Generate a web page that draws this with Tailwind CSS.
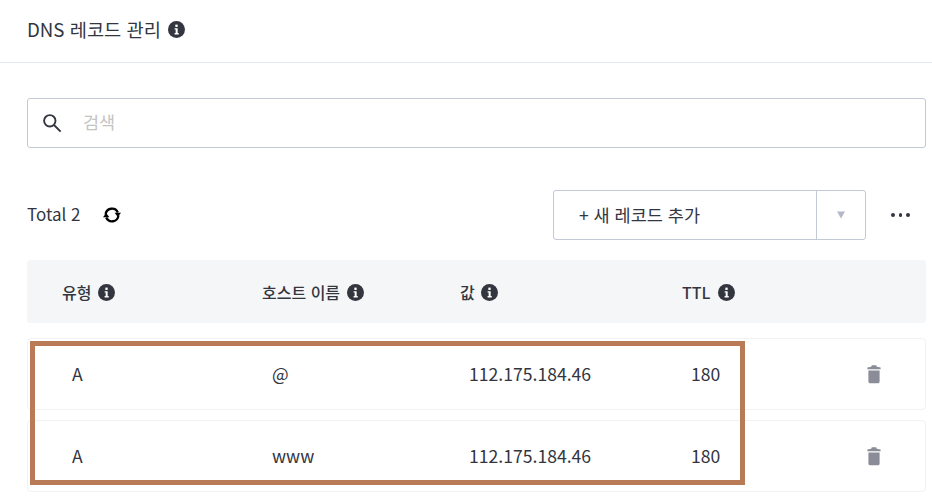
<!DOCTYPE html>
<html lang="ko">
<head>
<meta charset="utf-8">
<title>DNS 레코드 관리</title>
<script src="https://cdn.jsdelivr.net/npm/@tailwindcss/browser@4"></script>
</head>
<body class="bg-white overflow-hidden font-['Noto_Sans_CJK_KR','Noto_Sans',sans-serif] text-[#33363f]">
<div class="relative w-[932px] h-[497px] overflow-hidden">

  <!-- header -->
  <div class="h-[63px] border-b border-[#e3e8ee] pl-[27px] pt-[17px] flex items-start gap-[7px]">
    <span class="text-[18.7px] leading-[24px]">DNS 레코드 관리</span>
    <svg class="w-[17px] h-[17px] mt-[4px]" viewBox="0 0 16 16"><circle cx="8" cy="8" r="8" fill="#33363f"/><rect x="6.9" y="3.4" width="2.2" height="2.2" fill="#fff"/><path d="M6.2 6.8h2.9v4.6h1v1.3H6.2v-1.3h1V8.1h-1z" fill="#fff"/></svg>
  </div>

  <div class="pl-[27px] w-[926px]">
    <!-- search -->
    <div class="mt-[35px] h-[50px] border border-[#c2cad6] rounded-[3px] flex items-center pl-[14px]">
      <svg class="w-[20px] h-[20px]" viewBox="0 0 20 20" fill="none" stroke="#33363f" stroke-width="1.9"><circle cx="7.8" cy="7.8" r="5.7"/><path d="M12 12l6.6 6.6"/></svg>
      <span class="ml-[21px] text-[17.5px] leading-[24px] -mt-[2px] text-[#c4c4c4]">검색</span>
    </div>

    <!-- toolbar -->
    <div class="mt-[42px] h-[50px] flex items-center">
      <span class="text-[17px] leading-[24px] -mt-[2px]">Total 2</span>
      <svg class="ml-[22px] w-[18px] h-[18px]" viewBox="0 0 18 18" fill="none" stroke="#000" stroke-width="2.3"><path d="M2.6 8.5A6.4 6.4 0 0 1 14.8 6.4"/><path d="M15.4 9.5A6.4 6.4 0 0 1 3.2 11.6"/><path d="M11.6 6.8h6.4L14.8 11z" fill="#000" stroke="none"/><path d="M6.4 11.2H0L3.2 7z" fill="#000" stroke="none"/></svg>
      <div class="ml-auto mr-[25px] w-[313px] h-[50px] border border-[#c2cad6] rounded-[3px] flex">
        <div class="flex-1 pl-[25px] flex items-center text-[17.5px] leading-[24px]">+ 새 레코드 추가</div>
        <div class="w-[49px] border-l border-[#c2cad6] flex items-center justify-center">
          <svg class="w-[8px] h-[8px]" viewBox="0 0 8 8"><path d="M0 .5h8L4 7.5z" fill="#b4b8c8"/></svg>
        </div>
      </div>
      <div class="mr-[15px] flex gap-[4px] w-[20px]">
        <span class="w-[3.5px] h-[3.5px] rounded-full bg-[#33363f]"></span>
        <span class="w-[3.5px] h-[3.5px] rounded-full bg-[#33363f]"></span>
        <span class="w-[3.5px] h-[3.5px] rounded-full bg-[#33363f]"></span>
      </div>
    </div>

    <!-- table head -->
    <div class="mt-[20px] h-[63px] bg-[#f5f6f8] rounded-[3px] flex items-center text-[16px] font-medium">
      <div class="w-[235px] pl-[35px] flex items-center gap-[7px]">유형
        <svg class="w-[17px] h-[17px] mt-[1px]" viewBox="0 0 16 16"><circle cx="8" cy="8" r="8" fill="#33363f"/><rect x="6.9" y="3.4" width="2.2" height="2.2" fill="#fff"/><path d="M6.2 6.8h2.9v4.6h1v1.3H6.2v-1.3h1V8.1h-1z" fill="#fff"/></svg>
      </div>
      <div class="w-[198px] flex items-center gap-[7px]">호스트 이름
        <svg class="w-[17px] h-[17px] mt-[1px]" viewBox="0 0 16 16"><circle cx="8" cy="8" r="8" fill="#33363f"/><rect x="6.9" y="3.4" width="2.2" height="2.2" fill="#fff"/><path d="M6.2 6.8h2.9v4.6h1v1.3H6.2v-1.3h1V8.1h-1z" fill="#fff"/></svg>
      </div>
      <div class="w-[222px] flex items-center gap-[6px]">값
        <svg class="w-[17px] h-[17px] mt-[1px]" viewBox="0 0 16 16"><circle cx="8" cy="8" r="8" fill="#33363f"/><rect x="6.9" y="3.4" width="2.2" height="2.2" fill="#fff"/><path d="M6.2 6.8h2.9v4.6h1v1.3H6.2v-1.3h1V8.1h-1z" fill="#fff"/></svg>
      </div>
      <div class="flex items-center gap-[8px]">TTL
        <svg class="w-[17px] h-[17px] mt-[1px]" viewBox="0 0 16 16"><circle cx="8" cy="8" r="8" fill="#33363f"/><rect x="6.9" y="3.4" width="2.2" height="2.2" fill="#fff"/><path d="M6.2 6.8h2.9v4.6h1v1.3H6.2v-1.3h1V8.1h-1z" fill="#fff"/></svg>
      </div>
    </div>

    <!-- rows -->
    <div class="mt-[15px] flex flex-col gap-[10px] text-[17.6px]">
      <div class="h-[72px] border border-[#f1f2f4] rounded-[4px] flex items-start pt-[23px] leading-[24px]">
        <div class="w-[244px] pl-[44px]">A</div>
        <div class="w-[197px]">@</div>
        <div class="w-[222px]">112.175.184.46</div>
        <div class="w-[174px]">180</div>
        <svg class="w-[18px] h-[20px] mt-[2px]" viewBox="0 0 18 20"><path d="M2.4 3.6l3.8-.9.6-1.5h4.4l.6 1.5 3.8.9v1.6H2.4z" fill="#8a8d97"/><path d="M3.4 6.6h11.2v10.8a1.9 1.9 0 0 1-1.9 1.9H5.3a1.9 1.9 0 0 1-1.9-1.9z" fill="#8a8d97"/></svg>
      </div>
      <div class="h-[72px] border border-[#f1f2f4] rounded-[4px] flex items-start pt-[23px] leading-[24px]">
        <div class="w-[244px] pl-[44px]">A</div>
        <div class="w-[197px]">www</div>
        <div class="w-[222px]">112.175.184.46</div>
        <div class="w-[174px]">180</div>
        <svg class="w-[18px] h-[20px] mt-[2px]" viewBox="0 0 18 20"><path d="M2.4 3.6l3.8-.9.6-1.5h4.4l.6 1.5 3.8.9v1.6H2.4z" fill="#8a8d97"/><path d="M3.4 6.6h11.2v10.8a1.9 1.9 0 0 1-1.9 1.9H5.3a1.9 1.9 0 0 1-1.9-1.9z" fill="#8a8d97"/></svg>
      </div>
    </div>
  </div>

  <!-- annotation box drawn over the rows -->
  <div class="absolute left-[30px] top-[341px] w-[715px] h-[144px] border-[5px] border-[#b97a57]"></div>
</div>
</body>
</html>
